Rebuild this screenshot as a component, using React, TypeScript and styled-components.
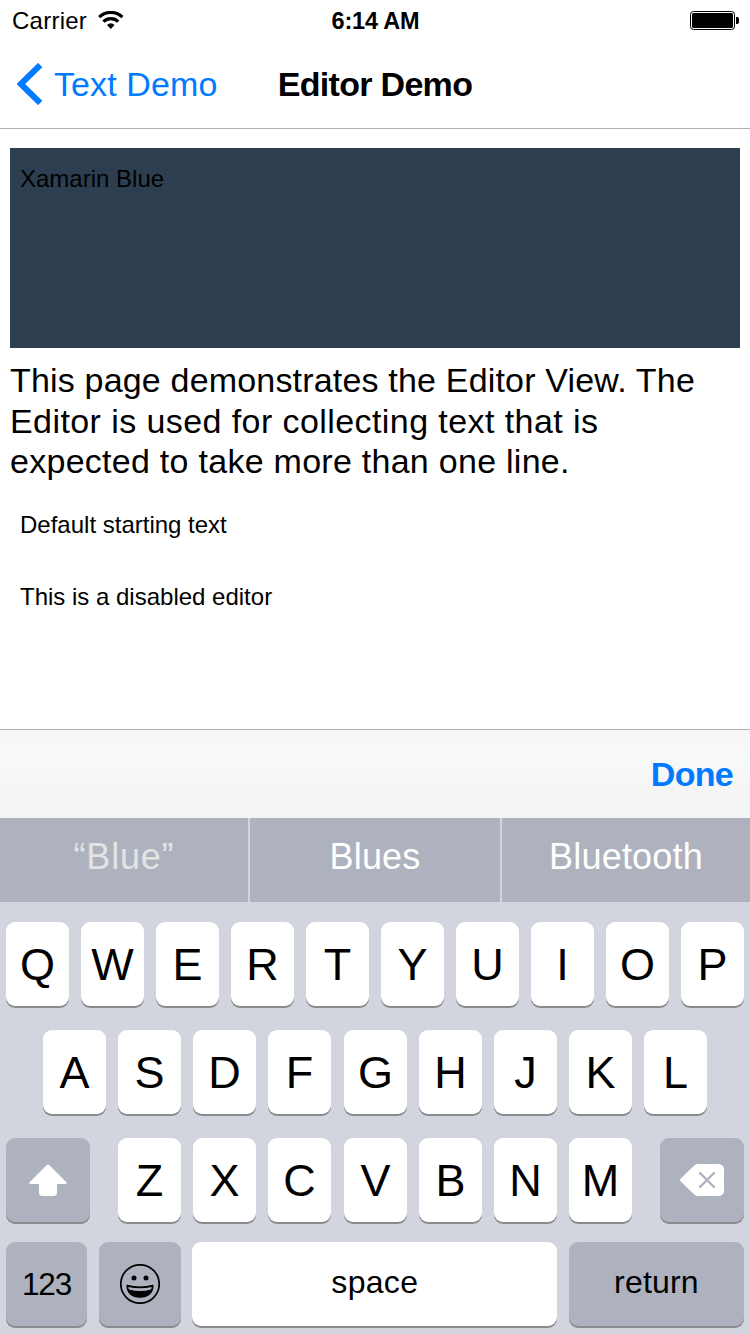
import React from 'react';
import styled, { createGlobalStyle, css } from 'styled-components';

const GlobalStyle = createGlobalStyle`
  * { box-sizing: border-box; }
  body {
    margin: 0;
    background: #fff;
    color: #000;
    font-family: "Liberation Sans", Arial, sans-serif;
  }
`;

const Screen = styled.div`
  display: flex;
  flex-direction: column;
  width: 750px;
  height: 1334px;
  overflow: hidden;
`;

const StatusBar = styled.div`
  display: grid;
  grid-template-columns: 1fr auto 1fr;
  align-items: center;
  height: 40px;
  padding: 2px 11px 0 12px;
  font-size: 24px;
  line-height: 28px;
`;

const Carrier = styled.div`
  display: flex;
  align-items: center;
  gap: 11px;
  letter-spacing: 0.25px;

  svg { margin-bottom: 2px; }
`;

const Clock = styled.div`
  font-size: 23.5px;
  font-weight: bold;
  letter-spacing: -0.2px;
`;

const BatterySlot = styled.div`
  display: flex;
  justify-content: flex-end;
  padding-bottom: 1px;
`;

const NavBar = styled.div`
  display: grid;
  grid-template-columns: 1fr auto 1fr;
  align-items: center;
  height: 89px;
  padding: 0 17px 0 17px;
  border-bottom: 1px solid #b2b2b2;
  font-size: 34px;
  line-height: 40px;
`;

const BackButton = styled.div`
  display: flex;
  align-items: center;
  gap: 11px;
  color: #007aff;
  letter-spacing: 0.1px;
`;

const Title = styled.div`
  font-weight: bold;
  letter-spacing: -0.7px;
`;

const Content = styled.div`
  display: flex;
  flex-direction: column;
  height: 600px;
  padding: 19px 10px 0;
`;

const Editor = styled.div<{ $height: number; $filled?: boolean }>`
  height: ${(p) => p.$height}px;
  padding: 17px 10px 0;
  font-size: 24px;
  line-height: 28px;
  ${(p) => p.$filled && css`background: #2c3e50;`}
`;

const Description = styled.p`
  margin: 12px 0 10px;
  height: 124px;
  font-size: 34px;
  line-height: 40.5px;
  white-space: nowrap;
`;

const Line = styled.span<{ $tracking: number }>`
  display: block;
  letter-spacing: ${(p) => p.$tracking}px;
`;

const AccessoryBar = styled.div`
  display: flex;
  align-items: center;
  justify-content: flex-end;
  height: 89px;
  padding: 0 17px 0;
  border-top: 1px solid #b0b0b0;
  background: linear-gradient(#f7f7f7, #f8f9f9 35%, #f5f5f5 65%, #f4f5f6);
`;

const DoneButton = styled.div`
  color: #007aff;
  font-size: 34px;
  font-weight: bold;
  line-height: 40px;
  letter-spacing: -0.7px;
`;

const Suggestions = styled.div`
  display: grid;
  grid-template-columns: 248px 250px 248px;
  gap: 2px;
  height: 84px;
  background: #d2d5dd;
`;

const Suggestion = styled.div<{ $quoted?: boolean }>`
  display: flex;
  align-items: center;
  justify-content: center;
  padding-bottom: 6px;
  background: #aeb2be;
  color: ${(p) => (p.$quoted ? '#e3e3e3' : '#fff')};
  font-size: 36px;
  letter-spacing: ${(p) => (p.$quoted ? 0.8 : 0.2)}px;
`;

const Keyboard = styled.div`
  height: 432px;
  padding: 20px 6px 0;
  background: #d2d5dd;
`;

const KeyRow = styled.div<{ $bottom: number; $justify?: string; $gap?: number }>`
  display: flex;
  justify-content: ${(p) => p.$justify ?? 'center'};
  gap: ${(p) => p.$gap ?? 12}px;
  margin-bottom: ${(p) => p.$bottom}px;
`;

const KeyGroup = styled.div`
  display: flex;
  gap: 12px;
`;

const Key = styled.div<{ $width?: number; $dark?: boolean; $size?: number; $lift?: number; $tracking?: number }>`
  display: flex;
  flex: none;
  align-items: center;
  justify-content: center;
  width: ${(p) => p.$width ?? 63}px;
  height: 84px;
  padding-bottom: ${(p) => p.$lift ?? 0}px;
  border-radius: 9px;
  background: ${(p) => (p.$dark ? '#aeb2be' : '#fff')};
  box-shadow: 0 2px 0 #898b8f;
  font-size: ${(p) => p.$size ?? 45}px;
  line-height: 50px;
  letter-spacing: ${(p) => p.$tracking ?? 0}px;
`;

const LetterKey = styled(Key)`
  padding-top: 2px;
`;

const WifiIcon = () => (
  <svg width="26" height="18" viewBox="0 0 26 18" fill="none" stroke="#000">
    <path d="M1.2 6.2A16.6 16.6 0 0 1 24.4 6.2" strokeWidth="3.2" />
    <path d="M5.4 10.6A10.6 10.6 0 0 1 20.2 10.6" strokeWidth="3.2" />
    <path d="M9 14A5.8 5.8 0 0 1 16.6 14L12.8 18Z" fill="#000" stroke="none" />
  </svg>
);

const BatteryIcon = () => (
  <svg width="49" height="19" viewBox="0 0 49 19">
    <rect x="0.5" y="0.5" width="44" height="18" rx="3" fill="none" stroke="#000" />
    <rect x="2" y="2" width="41" height="15" rx="1.5" />
    <path d="M46 6h1.2a2 2 0 0 1 1.8 2v3a2 2 0 0 1-1.8 2H46z" />
  </svg>
);

const BackChevron = () => (
  <svg width="26" height="42" viewBox="0 0 26 42" fill="none">
    <path d="M23.2 2L3.8 21L23.2 40" stroke="#007aff" strokeWidth="6" />
  </svg>
);

const ShiftIcon = () => (
  <svg width="38" height="32" viewBox="0 0 38 32" fill="#fff">
    <path d="M18 .8Q19 0 20 .8L37.4 18.2Q38.4 20 36.6 20H28V28.5Q28 32 24.5 32H13.5Q10 32 10 28.5V20H1.4Q-.4 20 .6 18.2Z" />
  </svg>
);

const DeleteIcon = () => (
  <svg width="44" height="32" viewBox="0 0 44 32">
    <path
      d="M14.5 1.3Q16.2 0 18.5 0H38Q44 0 44 6V26Q44 32 38 32H18.5Q16.2 32 14.5 30.7L.8 17.6Q-.6 16 .8 14.4Z"
      fill="#fff"
    />
    <path d="M20 9L34 23M34 9L20 23" stroke="#aeb2be" strokeWidth="2.4" strokeLinecap="round" />
  </svg>
);

const EmojiIcon = () => (
  <svg width="40" height="40" viewBox="0 0 40 40">
    <circle cx="20" cy="20" r="19.2" fill="none" stroke="#000" strokeWidth="1.7" />
    <circle cx="14" cy="14" r="2.5" />
    <circle cx="26" cy="14" r="2.5" />
    <path
      d="M7 21.3Q20 24.8 33 21.3C33 29.5 27.5 33.2 20 33.2S7 29.5 7 21.3Z"
      fill="#000"
      stroke="#000"
      strokeWidth="1.2"
      strokeLinejoin="round"
    />
    <path d="M8.2 22.9Q20 25.6 31.8 22.9Q31.5 24.4 31 25.4Q20 28.8 9 25.4Q8.5 24.4 8.2 22.9Z" fill="#aeb2be" />
  </svg>
);

const Letters = ({ chars }: { chars: string }) => (
  <KeyGroup>
    {chars.split('').map((c) => (
      <LetterKey key={c}>{c}</LetterKey>
    ))}
  </KeyGroup>
);

export default function App() {
  return (
    <>
      <GlobalStyle />
      <Screen>
        <StatusBar>
          <Carrier>
            Carrier
            <WifiIcon />
          </Carrier>
          <Clock>6:14 AM</Clock>
          <BatterySlot>
            <BatteryIcon />
          </BatterySlot>
        </StatusBar>
        <NavBar>
          <BackButton>
            <BackChevron />
            Text Demo
          </BackButton>
          <Title>Editor Demo</Title>
        </NavBar>
        <Content>
          <Editor $height={200} $filled>Xamarin Blue</Editor>
          <Description>
            <Line $tracking={0.18}>This page demonstrates the Editor View. The</Line>
            <Line $tracking={0.42}>Editor is used for collecting text that is</Line>
            <Line $tracking={0.27}>expected to take more than one line.</Line>
          </Description>
          <Editor $height={72}>Default starting text</Editor>
          <Editor $height={72}>This is a disabled editor</Editor>
        </Content>
        <AccessoryBar>
          <DoneButton>Done</DoneButton>
        </AccessoryBar>
        <Suggestions>
          <Suggestion $quoted>“Blue”</Suggestion>
          <Suggestion>Blues</Suggestion>
          <Suggestion>Bluetooth</Suggestion>
        </Suggestions>
        <Keyboard>
          <KeyRow $bottom={24}>
            <Letters chars="QWERTYUIOP" />
          </KeyRow>
          <KeyRow $bottom={24} $gap={13}>
            <Letters chars="ASDF" />
            <Letters chars="GHJKL" />
          </KeyRow>
          <KeyRow $bottom={20} $justify="space-between">
            <Key $dark $width={84}><ShiftIcon /></Key>
            <KeyRow $bottom={0} $gap={13}>
              <Letters chars="ZXC" />
              <Letters chars="VBNM" />
            </KeyRow>
            <Key $dark $width={84}><DeleteIcon /></Key>
          </KeyRow>
          <KeyRow $bottom={0} $justify="space-between" $gap={0}>
            <Key $dark $size={31.5} $tracking={-1.2} $width={81}>123</Key>
            <Key $dark $width={82}><EmojiIcon /></Key>
            <Key $size={32} $lift={4} $tracking={0.3} $width={365}>space</Key>
            <Key $dark $size={32} $lift={4} $tracking={0.2} $width={175}>return</Key>
          </KeyRow>
        </Keyboard>
      </Screen>
    </>
  );
}
